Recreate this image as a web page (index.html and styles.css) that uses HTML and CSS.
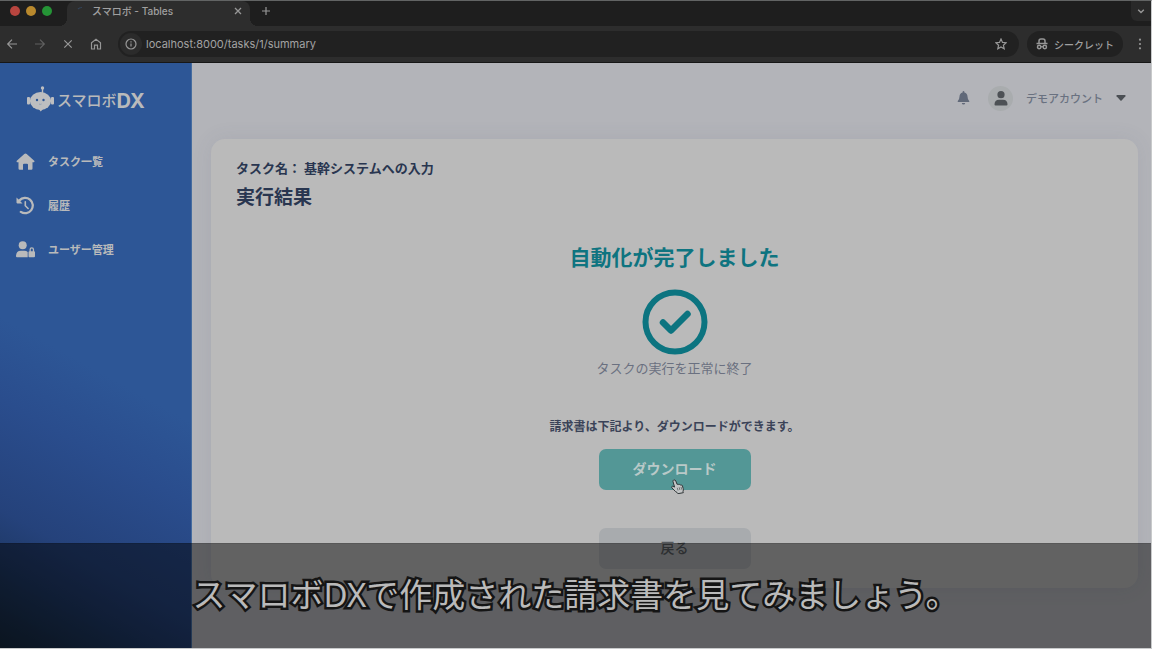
FILE: index.html
```html
<!DOCTYPE html>
<html lang="ja">
<head>
<meta charset="utf-8">
<meta name="viewport" content="width=device-width, initial-scale=1">
<title>スマロボ - Tables</title>
<link rel="stylesheet" href="styles.css">
</head>
<body>
<div class="window">
  <header class="chrome">
    <div class="tabstrip">
      <div class="lights"><span class="light red"></span><span class="light amber"></span><span class="light green"></span></div>
      <div class="tab">
        <svg class="spinner" viewBox="0 0 12 12" aria-hidden="true"><path d="M3 4Q4.500 2.500 7 2.500" fill="none" stroke="#33445a" stroke-width="1.200"/></svg>
        <span class="tab-title">スマロボ - Tables</span>
        <button class="icon-btn tab-close" aria-label="タブを閉じる"><svg class="ic8" viewBox="0 0 8 8"><path d="M1 1l6 6M7 1L1 7" stroke-width="1.300"/></svg></button>
      </div>
      <button class="icon-btn new-tab" aria-label="新しいタブ"><svg class="ic10" viewBox="0 0 10 10"><path d="M5 1v8M1 5h8"/></svg></button>
      <button class="icon-btn tab-search" aria-label="タブを検索"><svg class="ic8" viewBox="0 0 8 8"><path d="M1.200 2.700L4 5.500l2.800-2.800" stroke-width="1.400"/></svg></button>
    </div>
    <div class="toolbar">
      <nav class="browser-nav" aria-label="ブラウザ">
        <button class="icon-btn" aria-label="戻る"><svg class="ic12" viewBox="0 0 12 12"><path d="M11 6H2M6 1.700L1.700 6 6 10.300"/></svg></button>
        <button class="icon-btn dim" aria-label="進む"><svg class="ic12" viewBox="0 0 12 12"><path d="M1 6h9M6 1.700L10.300 6 6 10.300"/></svg></button>
        <button class="icon-btn" aria-label="中止"><svg class="ic12" viewBox="0 0 12 12"><path d="M2.300 2.300l7.400 7.400M9.700 2.300L2.300 9.700"/></svg></button>
        <button class="icon-btn" aria-label="ホーム"><svg class="ic12" viewBox="0 0 12 12"><path d="M1.500 11V4.800L6 1.200l4.500 3.600V11H7.500V7.200h-3V11z"/></svg></button>
      </nav>
      <div class="address">
        <button class="icon-btn site-info" aria-label="サイト情報"><svg class="ic12" viewBox="0 0 12 12"><circle cx="6" cy="6" r="5"/><path d="M6 5.400v3.200M6 3.200v1.200"/></svg></button>
        <input class="url" type="text" aria-label="アドレス" value="localhost:8000/tasks/1/summary">
        <button class="icon-btn" aria-label="ブックマーク"><svg class="ic12" viewBox="0 0 12 12"><path d="M6 1l1.500 3.400 3.700.3-2.800 2.500.8 3.600L6 8.900l-3.200 1.900.8-3.600L.8 4.700l3.700-.3z"/></svg></button>
      </div>
      <button class="incognito">
        <svg class="ic12" viewBox="0 0 12 12" aria-hidden="true"><path d="M3 5V3Q3 1 5 1h2q2 0 2 2v2M.5 5.500h11" stroke-width="1.500"/><circle cx="3.200" cy="9" r="1.700" stroke-width="1.500"/><circle cx="8.800" cy="9" r="1.700" stroke-width="1.500"/><path d="M4.900 8.700h2.200"/></svg>
        シークレット
      </button>
      <button class="icon-btn menu" aria-label="メニュー"><svg class="ic12" viewBox="0 0 12 12"><g fill="#979797" stroke="none"><circle cx="6" cy="1.700" r="1.100"/><circle cx="6" cy="6" r="1.100"/><circle cx="6" cy="10.300" r="1.100"/></g></svg></button>
    </div>
  </header>

  <div class="app">
    <aside class="sidebar">
      <a class="logo" href="#">
        <svg class="robot" viewBox="0 0 27 26" aria-hidden="true"><g fill="#bdbec0"><circle cx="15.500" cy="2" r="1.700"/><path d="M15 3h1.200v4h-1.600z"/><ellipse cx="13.500" cy="15" rx="10.600" ry="9"/><rect x="0" y="11" width="3" height="7.500" rx="1"/><rect x="24" y="11" width="3" height="7.500" rx="1"/><path d="M11.500 22.500h5l-2.800 3z"/></g><g fill="#2d5594"><circle cx="10" cy="14" r="1.200"/><circle cx="16.500" cy="14" r="1.200"/></g><path d="M12 18q1.300.8 2.600 0" fill="none" stroke="#8296b2" stroke-width=".7"/></svg>
        <span class="logo-kana">スマロボ</span><span class="logo-dx">DX</span>
      </a>
      <nav class="side-nav" aria-label="メイン">
        <a class="side-link" href="#">
          <svg class="side-icon" viewBox="0 0 19 19" aria-hidden="true"><path d="M9.500 1.500q.7 0 1.200.5l7.500 6.700q.5.500.2 1t-.9.500H16.500v6.300q0 1.200-1.200 1.200H12v-5q0-1-1-1H8q-1 0-1 1v5H3.700q-1.200 0-1.200-1.200V10.200H1.500q-.7 0-.9-.5t.2-1L8.300 2q.5-.5 1.200-.5z"/></svg>
          タスク一覧</a>
        <a class="side-link" href="#">
          <svg class="side-icon" viewBox="0 0 19 19" aria-hidden="true"><path d="M.5 1.500L2.600 3.600A8.800 8.800 0 1 1 4.200 16.800a1.100 1.100 0 1 1 1.300-1.900A6.500 6.500 0 1 0 4.300 5.200L6.500 7.400H1.300q-.8 0-.8-.8z"/><path d="M9.300 5.700v4l2.800 2.800" fill="none" stroke="#b9babb" stroke-width="1.600" stroke-linecap="round"/></svg>
          履歴</a>
        <a class="side-link" href="#">
          <svg class="side-icon" viewBox="0 0 19 19" aria-hidden="true"><circle cx="6.700" cy="5.300" r="4"/><path d="M5 10.800h3.400q2 0 3.300 1.200v5.300H1q-1 0-1-1 0-5.500 5-5.500z"/><path fill-rule="evenodd" d="M13.500 11.300V9.500a2.300 2.300 0 0 1 4.600 0v1.800q.9.100.9 1v4q0 1-1 1h-4.500q-1 0-1-1v-4q0-.9 1-1zm1.300 0h2V9.500a1 1 0 0 0-2 0z"/></svg>
          ユーザー管理</a>
      </nav>
    </aside>

    <main class="main">
      <div class="topbar">
        <button class="icon-btn" aria-label="通知"><svg class="bell" viewBox="0 0 12 14"><path d="M6 0q.9 0 .9 1v.4Q10 2.200 10 5.600q0 2.700 1.700 4.300.6.800-.4 1.100H.7q-1-.3-.4-1.100Q2 8.300 2 5.600 2 2.200 5.100 1.400V1Q5.100 0 6 0zM4.300 12h3.400Q7.500 13.600 6 13.600T4.300 12z"/></svg></button>
        <button class="account">
          <span class="avatar"><svg class="person" viewBox="0 0 14 15" aria-hidden="true"><circle cx="7" cy="3.700" r="3.600"/><path d="M5 8.800h4q4.500 0 4.500 4.700 0 1-1 1h-11q-1 0-1-1Q.5 8.800 5 8.800z"/></svg></span>
          <span class="account-name">デモアカウント</span>
          <svg class="caret" viewBox="0 0 10 6" aria-hidden="true"><path d="M1 0h8q1 .3.400 1.200L5.600 5.500q-.6.500-1.200 0L.6 1.200Q0 .3 1 0z"/></svg>
        </button>
      </div>
      <section class="card">
        <p class="task-name">タスク名： 基幹システムへの入力</p>
        <h1 class="heading">実行結果</h1>
        <div class="result">
          <h2 class="done">自動化が完了しました</h2>
          <svg class="check" viewBox="0 0 66 66" aria-hidden="true"><circle cx="33" cy="33" r="29.500" stroke-width="6"/><path d="M21 33.500l8 8L45.500 25" stroke-width="6.500" stroke-linecap="round" stroke-linejoin="round"/></svg>
          <p class="note">タスクの実行を正常に終了</p>
          <p class="guide">請求書は下記より、ダウンロードができます。</p>
          <button class="action download">ダウンロード
            <svg class="pointer" viewBox="0 0 14 15" aria-hidden="true"><path d="M2.700 1Q4.200.4 4.800 2l1.300 3.400q1-.8 1.700.2 1-.6 1.700.4 1.500-.4 1.900.8l.8 2.700q.4 1.600-.2 3l.3 1.200-5.400 1-.8-1.200Q4.300 12.700 3 11L.8 8.800Q.4 7.300 1.700 7.200l1.900.9L2 2.600Q1.900 1.400 2.700 1z" fill="#c3c5c6" stroke="#303638" stroke-width="1"/><path d="M6.300 8.800l.7 2.700M8.200 8.300l.7 2.700M10 7.900l.7 2.700" stroke="#4b5152" stroke-width=".7"/></svg>
          </button>
          <button class="action back">戻る</button>
        </div>
      </section>
    </main>
  </div>
  <div class="caption">スマロボDXで作成された請求書を見てみましょう。</div>
</div>
</body>
</html>
```
FILE: styles.css
```css
* { box-sizing: border-box; }
body {
  margin: 0;
  font-family: Inter, "Noto Sans CJK JP", sans-serif;
  font-size: 12px;
}
h1, h2, p { margin: 0; }
a { color: inherit; text-decoration: none; }
button { border: 0; padding: 0; background: none; font: inherit; color: inherit; }
svg { display: block; flex: none; }

.window {
  position: relative;
  display: flex;
  flex-direction: column;
  height: 100vh;
  overflow: hidden;
  border-top: 1px solid #626464;
  border-right: 1px solid #c8cacb;
  border-bottom: 1px solid #c8cacb;
}

/* Browser chrome */
.chrome { background: #2d2d2d; border-bottom: 1px solid #171717; color: #a0a0a0; }
.tabstrip { display: flex; align-items: stretch; height: 25px; background: #1e1e1e; }
.lights { display: flex; align-items: center; gap: 6px; width: 67px; padding: 0 0 5px 10px; }
.light { width: 10px; height: 10px; border-radius: 50%; }
.red { background: #b8453f; }
.amber { background: #b9892d; }
.green { background: #259436; }
.tab {
  position: relative;
  display: flex;
  align-items: center;
  width: 183px;
  padding: 0 8px 6px;
  background: #2d2d2d;
  border-radius: 8px 8px 0 0;
}
.tab::before, .tab::after {
  content: "";
  position: absolute;
  bottom: 0;
  width: 8px;
  height: 8px;
}
.tab::before { right: 100%; background: radial-gradient(circle at 0 0, #1e1e1e 8px, #2d2d2d 8px); }
.tab::after { left: 100%; background: radial-gradient(circle at 100% 0, #1e1e1e 8px, #2d2d2d 8px); }
.spinner { width: 12px; height: 12px; margin-right: 5px; }
.tab-title { flex: 1; font-size: 10px; font-weight: 500; line-height: 16px; white-space: nowrap; }
.icon-btn { display: flex; align-items: center; justify-content: center; flex: none; }
.icon-btn svg, .incognito svg { fill: none; stroke: #979797; stroke-width: 1.2; }
.icon-btn.dim svg { stroke: #606060; }
.ic8 { width: 8px; height: 8px; }
.ic10 { width: 10px; height: 10px; }
.ic12 { width: 12px; height: 12px; }
.new-tab { padding: 0 11px 5px; }
.tab-search { width: 20px; height: 20px; margin-left: auto; background: #292929; border-radius: 0 0 0 6px; }
.toolbar { display: flex; align-items: center; height: 36px; padding: 0 5px 0 6px; }
.browser-nav { display: flex; gap: 16px; padding-right: 16px; }
.address {
  display: flex;
  align-items: center;
  flex: 1;
  height: 26px;
  padding: 0 12px 0 2px;
  background: #212121;
  border-radius: 13px;
}
.site-info { width: 22px; height: 22px; border-radius: 50%; background: #2b2b2b; }
.url { flex: 1; min-width: 0; margin-left: 4px; padding: 0; border: 0; background: none; color: #a3a3a3; font: 11px Inter, sans-serif; }
.incognito { display: flex; align-items: center; gap: 6px; height: 26px; margin-left: 8px; padding: 0 9px; border-radius: 13px; background: #212121; font-size: 10px; font-weight: 500; }
.menu { margin-left: 11px; }

/* Application */
.app { display: flex; flex: 1; min-height: 0; }
.sidebar {
  width: 192px;
  flex: none;
  border-right: 1px solid #456c9f;
  background: linear-gradient(209deg, #2d5696 52%, #2a4d8d 64%, #25427b 80%, #203b6b 86%, #15283c 100%);
  color: #b9babb;
}
.logo { display: flex; align-items: center; padding: 26px 0 0 27px; height: 50px; }
.robot { width: 27px; height: 26px; margin: 0 3px 4px 0; }
.logo-kana { font-size: 15px; font-weight: 500; line-height: 20px; }
.logo-dx { font-size: 20px; font-weight: 700; line-height: 20px; }
.side-nav { display: grid; gap: 24px; padding: 38px 16px; }
.side-link { display: flex; align-items: center; gap: 13px; height: 20px; font-size: 11px; font-weight: 700; }
.side-icon { width: 19px; height: 19px; fill: #b9babb; }

.main { flex: 1; min-width: 0; padding: 0 13px 0 19px; background: #b3b4b9; }
.topbar { display: flex; justify-content: flex-end; align-items: center; gap: 18px; height: 76px; padding: 0 12px 6px 0; }
.topbar .bell { width: 13px; height: 14px; fill: #616979; stroke: none; }
.account { display: flex; align-items: center; gap: 13px; font-size: 11px; font-weight: 500; color: #697180; }
.avatar { display: grid; place-items: center; width: 25px; height: 25px; border-radius: 50%; background: #a9acae; }
.person { width: 14px; height: 15px; fill: #4d5155; }
.caret { width: 10px; height: 6px; fill: #4b4f54; }
.card {
  min-height: 449px;
  padding: 19px 25px 18px;
  border-radius: 14px;
  background: #bababa;
  box-shadow: 0 0 20px rgba(80, 90, 120, 0.1);
  color: #293650;
}
.task-name { font-size: 13px; font-weight: 700; line-height: 20px; }
.heading { margin-top: 6px; font-size: 19px; font-weight: 700; line-height: 28px; }
.result { display: flex; flex-direction: column; align-items: center; }
.done { margin-top: 30px; font-size: 21px; font-weight: 700; line-height: 32px; color: #0e7480; }
.check { width: 66px; height: 66px; margin-top: 15px; fill: none; stroke: #0c7480; }
.note { margin-top: 3px; font-size: 13px; line-height: 20px; color: #6a7080; }
.guide { margin-top: 39px; font-weight: 700; line-height: 20px; color: #3b4358; }
.action { position: relative; width: 152px; height: 41px; padding-bottom: 3px; border-radius: 7px; font-size: 14px; font-weight: 500; }
.download { margin-top: 12px; background: #539796; color: #b9c9c8; font-weight: 700; }
.back { margin-top: 38px; background: #a8abae; color: #55595e; }
.pointer { position: absolute; left: 72px; top: 30px; width: 14px; height: 15px; }

/* Subtitle band */
.caption {
  position: absolute;
  inset: auto 0 0 0;
  height: 105px;
  padding-top: 27px;
  border-top: 1px solid rgba(0, 0, 0, 0.1);
  background: rgba(0, 0, 0, 0.47);
  color: #bababa;
  font-family: "Noto Sans", "Noto Sans CJK JP", sans-serif;
  font-size: 33px;
  line-height: 48px;
  text-align: center;
  white-space: nowrap;
  -webkit-text-stroke: 5px #151515;
  paint-order: stroke fill;
}
```
